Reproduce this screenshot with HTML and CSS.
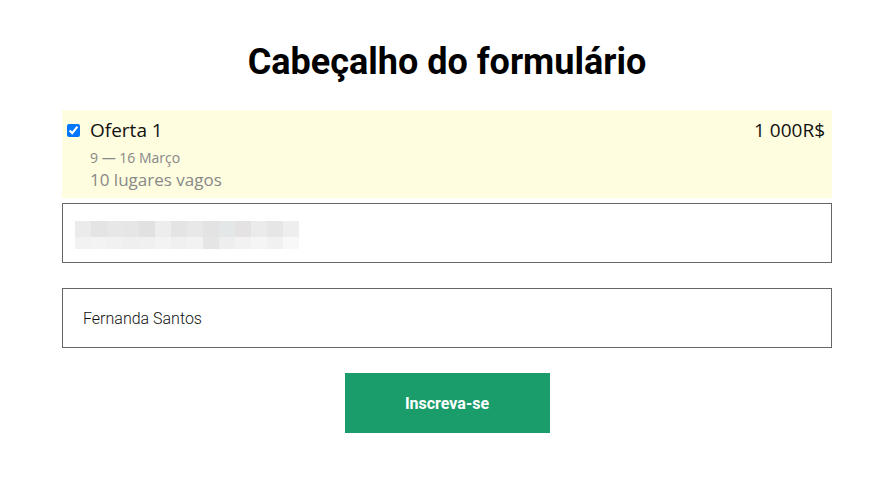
FILE: index.html
```html
<!DOCTYPE html>
<html lang="pt">
<head>
    <meta charset="UTF-8">
    <meta name="viewport" content="width=device-width, initial-scale=1.0">
    <title>Formulário</title>
    <link rel="stylesheet" href="styles.css">
</head>
<body>
    <form class="form">
        <h1 class="form-title">Cabeçalho do formulário</h1>

        <label class="offer">
            <input type="checkbox" class="offer-check" checked>
            <div class="offer-info">
                <div class="offer-name">Oferta 1</div>
                <div class="offer-dates">9 — 16 Março</div>
                <div class="offer-seats">10 lugares vagos</div>
            </div>
            <div class="offer-price">1 000R$</div>
        </label>

        <div class="field field-blurred">
            <div class="blur-row blur-top"></div>
            <div class="blur-row blur-bottom"></div>
        </div>

        <div class="field">
            <input type="text" class="field-input" value="Fernanda Santos">
        </div>

        <button type="button" class="submit">Inscreva-se</button>
    </form>
</body>
</html>
```

FILE: styles.css
```css
* {
    margin: 0;
    padding: 0;
    box-sizing: border-box;
}

body {
    background: #fff;
    color: #000;
    font-family: 'Roboto', sans-serif;
}

.form {
    width: 770px;
    margin-left: 62px;
    padding-top: 40px;
    display: flex;
    flex-direction: column;
    align-items: center;
}

.form-title {
    font-size: 36px;
    font-weight: 700;
    line-height: 44px;
    margin-bottom: 26px;
}

.offer {
    width: 100%;
    background: #fefddf;
    display: flex;
    align-items: flex-start;
    padding: 8px 7px 7px 5px;
    font-family: 'Open Sans', sans-serif;
}

.offer-check {
    width: 13px;
    height: 13px;
    margin: 6px 10px 0 0;
}

.offer-info {
    flex: 1;
}

.offer-name {
    font-size: 19px;
    line-height: 24px;
    color: #111;
}

.offer-dates {
    font-size: 14px;
    line-height: 20px;
    margin-top: 6px;
    color: #888;
}

.offer-seats {
    font-size: 17px;
    line-height: 22px;
    margin-top: 1px;
    color: #888;
}

.offer-price {
    font-size: 19px;
    line-height: 24px;
    color: #111;
}

.field {
    width: 100%;
    height: 60px;
    border: 1px solid #666;
    margin-top: 25px;
}

.field-blurred {
    margin-top: 5px;
    padding: 17px 0 0 12px;
}

.blur-row {
    width: 224px;
}

.blur-top {
    height: 16px;
    background: linear-gradient(90deg,
        #ebebeb 0 16px, #e4e4e4 16px 32px, #e7e7e7 32px 48px, #e6e6e6 48px 64px,
        #e1e1e1 64px 80px, #ededed 80px 96px, #e4e4e4 96px 112px, #e8e8e8 112px 128px,
        #e3e3e3 128px 144px, #e4e7e8 144px 160px, #e5e2e3 160px 176px, #ebebeb 176px 192px,
        #e6e6e6 192px 208px, #eeeeee 208px 224px);
}

.blur-bottom {
    height: 12px;
    background: linear-gradient(90deg,
        #f2f2f2 0 16px, #f3f3f3 16px 32px, #f1f1f1 32px 48px, #efefef 48px 64px,
        #f0f0f0 64px 80px, #f3f3f3 80px 96px, #f0f0f0 96px 112px, #f2f2f2 112px 128px,
        #e5e5e5 128px 144px, #eeeeee 144px 160px, #f2f2f2 160px 176px, #f5f5f5 176px 192px,
        #f1f1f1 192px 208px, #f8f8f8 208px 224px);
}

.field-input {
    width: 100%;
    height: 100%;
    border: none;
    outline: none;
    padding: 0 20px;
    font-family: 'Roboto', sans-serif;
    font-size: 16px;
    font-weight: 300;
    color: #111;
    background: transparent;
}

.submit {
    width: 205px;
    height: 60px;
    margin-top: 25px;
    border: none;
    background: #1b9c6b;
    color: #fff;
    font-family: 'Roboto', sans-serif;
    font-size: 16px;
    font-weight: 700;
    cursor: pointer;
}
```
